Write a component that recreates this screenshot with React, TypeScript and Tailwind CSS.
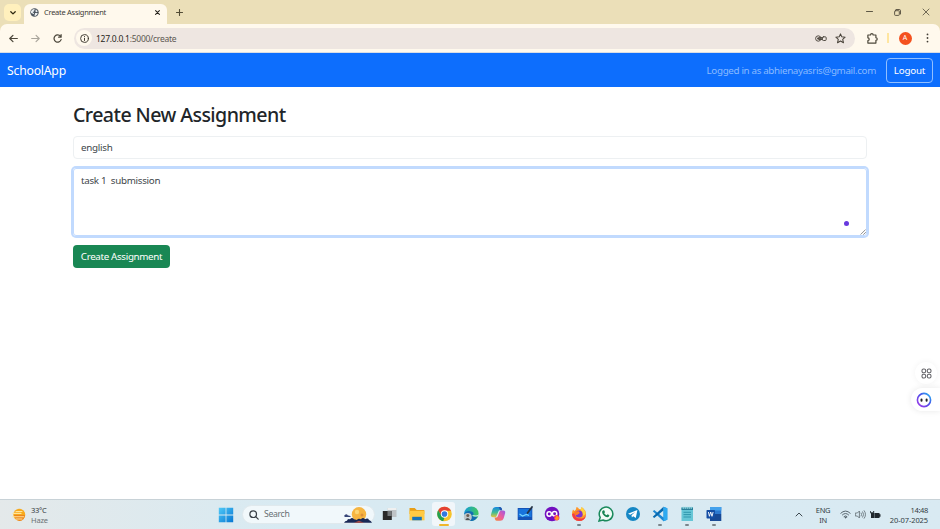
import type { ReactNode } from "react";

const svgProps = { fill: "none", strokeLinecap: "round", strokeLinejoin: "round" } as const;

function TabStrip() {
  return (
    <div className="flex h-6 bg-[#ebdfb8]">
      <div className="mt-[4px] ml-1 flex h-[17px] w-[17px] items-center justify-center rounded-[5px] bg-[#fff0bd]">
        <svg width="6" height="4" viewBox="0 0 6 4" {...svgProps} stroke="#302a12" strokeWidth="1.3"><path d="M.8.7 3 2.9 5.2.7" /></svg>
      </div>
      <div className="mt-1 ml-[3px] flex h-5 w-[143px] items-center rounded-t-[6px] bg-[#fff9ed] pr-[7px] pb-[3px] pl-[6px]">
        <svg width="9" height="9" viewBox="0 0 10 10"><circle cx="5" cy="5" r="4.7" fill="#4d5660" /><path d="M1 3.8C2 2 3 1 4.8 1.1l.5 1-1 .9v1L3 4.6l1.5 1.2-.4 1.1L2.7 6 1.2 5.5ZM6.5 1.5l2 2-.9 1.2-1.7-.8ZM5.7 5.6l2.9-.1-.8 2L5.9 9l-1-.5Z" fill="#e9edf0" /></svg>
        <span className="ml-[5px] grow text-[7.5px] tracking-[-0.28px] whitespace-nowrap text-[#3c3a36]">Create Assignment</span>
        <svg width="5" height="5" viewBox="0 0 5 5" {...svgProps} stroke="#25221b" strokeWidth="1.1"><path d="m.6.6 3.8 3.8m0-3.8L.6 4.4" /></svg>
      </div>
      <svg className="mt-[9px] ml-[9px]" width="7" height="7" viewBox="0 0 7 7" {...svgProps} stroke="#514b35" strokeWidth="1.1"><path d="M3.5.5v6m-3-3h6" /></svg>
      <div className="ml-auto flex h-6 items-center gap-[21px] pr-[10px]">
        <svg width="7" height="8" viewBox="0 0 7 8" {...svgProps} stroke="#5d5745"><path d="M.5 3.5h6" /></svg>
        <svg width="7" height="7" viewBox="0 0 7 7" {...svgProps} stroke="#514b3b" strokeWidth=".9"><rect x=".6" y="1.7" width="4.7" height="4.7" rx=".8" /><path d="M2 .5h3.2q1.3 0 1.3 1.3V5" /></svg>
        <svg width="8" height="8" viewBox="0 0 8 8" {...svgProps} stroke="#514b3b" strokeWidth=".8"><path d="m1 1 6 6m0-6L1 7" /></svg>
      </div>
    </div>
  );
}

function Toolbar() {
  return (
    <div className="bg-[#ebdfb8]">
      <div className="flex h-[29px] items-center rounded-t-[7px] border-b border-[#d9dde5] bg-[#fff9ed] pl-[9px]">
        <svg width="9" height="9" viewBox="0 0 8 8" {...svgProps} stroke="#4c473b" strokeWidth="1.1"><path d="M7.4 4H.8m2.7-2.8L.7 4l2.8 2.8" /></svg>
        <svg className="ml-[13px]" width="9" height="9" viewBox="0 0 8 8" {...svgProps} stroke="#aaa69c"><path d="M.6 4h6.6M4.5 1.2 7.3 4 4.5 6.8" /></svg>
        <svg className="ml-[13px]" width="9" height="9" viewBox="0 0 8 8" {...svgProps} stroke="#4c473b" strokeWidth="1.1"><path d="M6.7 2.1A3.2 3.2 0 1 0 7.2 5M7.2.6v2.2H5" /></svg>
        <div className="ml-[12px] flex h-[21px] w-[781px] items-center rounded-full bg-[#eee6e1] pr-[9px] pl-[2px]">
          <div className="flex size-[16px] items-center justify-center rounded-full bg-[#fff9ed]">
            <svg width="9" height="9" viewBox="0 0 9 9" {...svgProps} stroke="#3a362c" strokeWidth=".95"><circle cx="4.5" cy="4.5" r="3.9" /><path d="M4.5 4.2v2.3M4.5 2.5v.1" /></svg>
          </div>
          <span className="ml-[4px] grow pt-[2px] text-[8.5px] tracking-[-0.26px] text-[#5c5750]"><span className="text-[#292622]">127.0.0.1</span>:5000/create</span>
          <svg width="12" height="7" viewBox="0 0 12 7" {...svgProps} stroke="#514b43"><circle cx="3.3" cy="3.5" r="2.7" /><circle cx="3.3" cy="3.5" r=".8" fill="#514b43" /><path d="M4.2 2.6h3.1M4.2 4.5h3.1" /><rect x="7.4" y="1.8" width="3.8" height="3.7" rx="1" /></svg>
          <svg className="ml-[8px]" width="11" height="11" viewBox="0 0 10 10" {...svgProps} stroke="#49433a" strokeWidth=".95"><path d="m5 .8 1.2 2.7 3 .3L7 5.8l.7 3L5 7.3 2.3 8.8l.7-3-2.2-2 3-.3Z" /></svg>
        </div>
        <svg className="ml-[12px] shrink-0" width="11" height="11" viewBox="0 0 10 10" {...svgProps} stroke="#4e493b" strokeWidth="1.1"><path d="M.8 1.8h2.4a1.2 1.2 0 0 1 2.4 0h2.5v2.5a1.2 1.2 0 0 1 0 2.4v2.5H.8V6.8a1.2 1.2 0 0 0 0-2.4Z" /></svg>
        <div className="ml-[9px] h-[10px] w-[1.5px] shrink-0 bg-[#ffe6a0]" />
        <div className="ml-[10px] flex size-[13px] items-center justify-center rounded-full bg-[#f4511e] text-[7px] text-white">A</div>
        <svg className="ml-[14px]" width="3" height="10" viewBox="0 0 3 10" fill="#423e36"><circle cx="1.5" cy="1.4" r=".9" /><circle cx="1.5" cy="5" r=".9" /><circle cx="1.5" cy="8.6" r=".9" /></svg>
      </div>
    </div>
  );
}

function TaskIcon({ children, active, running }: { children: ReactNode; active?: boolean; running?: boolean }) {
  return (
    <div className="relative flex h-[29px] w-[27px] items-center justify-center pb-px">
      {active && <div className="absolute top-[2px] left-[2px] h-[24px] w-[23px] rounded-[3px] bg-[#f1f6fa]" />}
      <svg className="relative" width="16" height="16" viewBox="0 0 16 16">{children}</svg>
      {active && <div className="absolute bottom-[3px] h-[2px] w-[10px] rounded-full bg-[#efb62c]" />}
      {running && <div className="absolute bottom-[3px] h-[2px] w-[4px] rounded-full bg-[#7b858b]" />}
    </div>
  );
}

function Taskbar() {
  return (
    <footer className="flex h-[30px] items-center border-t border-[#c8d2d7] bg-linear-to-r from-[#e4e9ea] via-[#d8eaf2] via-30% to-[#d9eaf2]">
      <div className="flex w-[218px] items-center pl-[12px]">
        <svg width="14" height="14" viewBox="0 0 14 14"><circle cx="7.3" cy="6.8" r="6" fill="#f7aa1c" /><path d="M2 7h11q-.5 5.5-5.5 6Q3 12 2 7Z" fill="#ed841d" /><path d="M1 5.4h8M4 3.5h6M.7 8.7h11M4 11h6" stroke="#ffe49b" strokeWidth="1.1" strokeLinecap="round" /></svg>
        <div className="ml-[5px] text-[7.5px] leading-[10px]">
          <div className="tracking-[-0.3px] text-[#31373a]">33°C</div>
          <div className="tracking-[-0.15px] text-[#6b7174]">Haze</div>
        </div>
      </div>
      <svg width="16" height="16" viewBox="0 0 16 16"><defs><linearGradient id="win" x1="0" y1="0" x2="1" y2="1"><stop stopColor="#50c9f7" /><stop offset="1" stopColor="#0677d3" /></linearGradient></defs><path fill="url(#win)" d="M.8.8h6.8v6.8H.8ZM8.4.8h6.8v6.8H8.4ZM.8 8.4h6.8v6.8H.8ZM8.4 8.4h6.8v6.8H8.4Z" /></svg>
      <div className="ml-[8px] flex h-[19px] w-[133px] items-center rounded-full border border-[#e0e9ed] bg-[#f1f8fb] pl-[6px]">
        <svg width="10" height="10" viewBox="0 0 10 10" {...svgProps} stroke="#394047" strokeWidth="1.2"><circle cx="4.2" cy="4.2" r="3.3" /><path d="M6.7 6.7 9.2 9.2" /></svg>
        <span className="ml-[5px] grow pt-px text-[8.7px] tracking-[-0.35px] text-[#687075]">Search</span>
        <svg className="mr-[2px]" width="28" height="18" viewBox="0 0 28 18"><circle cx="15" cy="8.3" r="7.2" fill="#f6b541" /><circle cx="13" cy="6" r="2.2" fill="#fcd675" /><circle cx="18" cy="9" r="1.5" fill="#df913a" /><path d="M0 16.8q1-2 3-2 .5-2.5 3-1.5 2-2.5 4 0l3 .8q1-2 4-.9 2-2.5 4 0 3-1.7 4 .8 2 .7 3 2.8Z" fill="#192956" /><path d="M0 10q2-3 4-.5 2-.5 3 1.4H1Z" fill="#384679" /><path d="m10 16.8 5-2 5 2Z" fill="#a84c47" /></svg>
      </div>
      <div className="ml-px flex">
        <TaskIcon><path fill="#bfc4c7" d="M5.5 2h9v9h-9Z" /><path fill="#eff0f0" d="M5.5 2h9v2h-9Z" /><path fill="#292929" d="M.8 5h9v9h-9Z" /><path fill="#727678" d="M5.5 5h4.3v5H5.5Z" /></TaskIcon>
        <TaskIcon><path fill="#e89e16" d="M.5 2h5.2l2 2h7.6v4H.5Z" /><path fill="#ffca43" d="M.5 4.8h15v9.5H.5Z" /><path fill="#1773b8" d="M3.2 10.8h9.6v3.5H3.2Z" /></TaskIcon>
        <TaskIcon active><circle cx="8.5" cy="8" r="7.3" fill="#f5c42b" /><path d="M2.2 4.3A7.3 7.3 0 0 1 15 4.7H8.5L5.5 10Z" fill="#e44133" /><path d="M2.2 4.3 5.4 9.7 8.5 11.4 7.2 15.2A7.3 7.3 0 0 1 2.2 4.3Z" fill="#23a052" /><circle cx="8.5" cy="8" r="3.7" fill="white" /><circle cx="8.5" cy="8" r="2.8" fill="#3178df" /></TaskIcon>
        <TaskIcon><defs><linearGradient id="edge" x1="0" x2="1"><stop stopColor="#149bd9" /><stop offset="1" stopColor="#42c85a" /></linearGradient></defs><circle cx="8.4" cy="7.7" r="7.2" fill="url(#edge)" /><path d="M1.4 7q3-3 7-1.5c3.5 1.3 2 3.5.5 4.3 1.3 1.3 3.7 1.2 5.7.3Q11.9 16 7.4 14.7 2.4 13 1.4 7Z" fill="#146cb2" /><path d="M9 9.6q2 1.6 6 .6l.8-2q-1.4 2-4.9 1Z" fill="#e5f5f9" /><circle cx="4.8" cy="11" r="4" fill="#bec5c9" /><circle cx="4.8" cy="9.5" r="1.5" fill="#6c5c52" /><path d="M2.3 14q2-4 5 0Z" fill="#4c5258" /></TaskIcon>
        <TaskIcon><defs><linearGradient id="copLeft" x1="0" y1="0" x2="0" y2="1"><stop stopColor="#1688e1" /><stop offset=".55" stopColor="#43bd92" /><stop offset="1" stopColor="#f0c43b" /></linearGradient><linearGradient id="copRight" x1="1" y1="0" x2="0" y2="1"><stop stopColor="#9859e9" /><stop offset=".5" stopColor="#ed5d9a" /><stop offset="1" stopColor="#f58a35" /></linearGradient></defs><path d="M6 1h4q1.2 0 1.7 1.5l.5 1.8H10q-1.2 0-1.7 1.4L6.6 10q-.5 1.3-1.7 1.3H3Q.3 11.3 1 8.5l1.4-4.7Q3.2 1 6 1Z" fill="url(#copLeft)" /><path d="M11 4.5h2.2q2.6 0 1.9 2.7l-1.4 5q-.8 2.6-3.5 2.6H7q-1.5 0-2-1.5l-.4-1.7h1.5q1.3 0 1.7-1.4L9.4 6q.4-1.5 1.6-1.5Z" fill="url(#copRight)" /><path d="M8.6 1H10q1.2 0 1.7 1.5l.5 1.8h-2Z" fill="#2456af" /></TaskIcon>
        <TaskIcon><path fill="#1553b5" d="M.7 2h14.6v12H.7Z" /><path fill="#1874dc" d="M1.5 3h13v8h-13Z" /><path d="m2.5 8 3 2 4-1.5 2.5 1" fill="none" stroke="#78d6ff" strokeWidth="1.2" /><path d="M10.5 7 15 1" stroke="#273445" strokeWidth="1.8" strokeLinecap="round" /></TaskIcon>
        <TaskIcon><circle cx="8" cy="8" r="7.3" fill="#7210bf" /><circle cx="5.2" cy="8" r="2.2" fill="none" stroke="white" strokeWidth="1.5" /><circle cx="10.6" cy="7.8" r="2.2" fill="none" stroke="white" strokeWidth="1.5" /><circle cx="12.7" cy="11.8" r="2.7" fill="#ee2d76" /><path d="m10.7 13 2-4 2.5 3-2 2.5Z" fill="#ff9a1d" /></TaskIcon>
        <TaskIcon running><path d="M2 3.5 3.5 5l1.4-1.6L5.5 1q2 .7 2.5 2l2.5.5L10.5 1Q15.5 4 15 9q-1 6-7 6T1 8.5q0-3 1-5Z" fill="#ff9727" /><path d="M1 8q1 7 7 7t7-6q-2 4-5 3.5Q4 13 3.5 7Z" fill="#f33b45" /><circle cx="8.1" cy="8" r="3.6" fill="#8035cd" /><path d="m3.5 5.5 4.3-.2 1 1.7-2.6 2q-2.5.4-3-1.5Z" fill="#ff7926" /><path d="M10.5 1q4 3 4.2 7l-2.5 2q.3-4-2.6-6Z" fill="#ffd33e" /></TaskIcon>
        <TaskIcon><path d="M1 15 2.2 11.4A6.8 6.8 0 1 1 5 14Z" fill="#f1fbf6" stroke="#19895b" strokeWidth="1.5" /><path d="m5.2 4.2 1.2.2.6 1.8-.8 1q1 1.5 2.5 2.1l.9-1 1.8.9q-.3 2.2-2.2 2-3.6-.7-5-4.3-.5-1.8 1-2.7Z" fill="#188553" /></TaskIcon>
        <TaskIcon><circle cx="8" cy="8" r="7" fill="#1687c4" /><path d="m3 7.8 9.4-3.7-1.6 8-2.6-1.8-1.3 1.3-.4-2.3 3.7-3.2-5 2.7Z" fill="white" /></TaskIcon>
        <TaskIcon running><path d="m11.5.7 3.8 1.6v11.4l-3.8 1.6L.8 5.3l1.4-1.2 9.3 7.4Z" fill="#1c86d1" /><path d="m11.5.7-10.7 10 1.4 1.2 9.3-7.4Z" fill="#0869ae" /><path d="m11.5.7 3.8 1.6v11.4l-3.8 1.6Z" fill="#2eaaf0" /></TaskIcon>
        <TaskIcon running><path fill="#66c6d6" d="M2.5 1.5h11.5v13.5H2.5Z" /><path fill="#277e99" d="M2.5 1.5h11.5V4H2.5Z" /><path d="M4.2.7V3m2-2.3V3m2-2.3V3m2-2.3V3m2-2.3V3" stroke="#9bdce4" /><path d="M4.5 6.3h7.5M4.5 8.6h7.5M4.5 11h7.5" stroke="#3096ad" /></TaskIcon>
        <TaskIcon running><path fill="#2c78cf" d="M4 1h11.3v7H4Z" /><path fill="#42a1ec" d="M4 1h11.3v3.5H4Z" /><path fill="#174995" d="M4 8h11.3v7H4Z" /><rect y="4" x=".5" width="8.5" height="8.5" rx=".7" fill="#144da3" /><path d="m2.4 6 1 4.3L4.7 6 6 10.3 7.1 6" fill="none" stroke="white" strokeWidth=".9" /></TaskIcon>
      </div>
      <div className="ml-auto flex items-center pr-[12px] text-[7.5px] leading-[10px] text-[#333d43]">
        <svg width="8" height="5" viewBox="0 0 8 5" {...svgProps} stroke="#3f4a50"><path d="m1 4 3-3 3 3" /></svg>
        <div className="ml-[12px] w-[16px] text-center tracking-[-0.3px]">ENG<br />IN</div>
        <svg className="ml-[9px]" width="11" height="9" viewBox="0 0 11 9" {...svgProps} stroke="#526068" strokeWidth=".95"><path d="M.8 3.2q4.7-4.5 9.4 0M2.4 4.9q3.1-3 6.2 0M4 6.5q1.5-1.4 3 0" /><circle cx="5.5" cy="7.6" r=".5" fill="#526068" /></svg>
        <svg className="ml-[4px]" width="11" height="9" viewBox="0 0 11 9" {...svgProps} stroke="#5c676d" strokeWidth=".8"><path d="M.7 3h1.7l2-2v7l-2-2H.7Zm5.5 0q1 1.5 0 3m1.5-4.2q2 2.7 0 5.4M9.2.7q2.8 3.8 0 7.6" /></svg>
        <svg className="ml-[4px]" width="11" height="8" viewBox="0 0 11 8"><path d="M1 2h8.5v1.3h1v2.4h-1V7H1Z" fill="#20282e" /><path d="M.3 0v1.8h3.4V0M2 2v3" stroke="#20282e" fill="none" /><path d="M4.5 2v5" stroke="#91a0a7" strokeWidth=".5" /></svg>
        <div className="ml-[6px] w-[41px] text-right whitespace-nowrap"><span className="tracking-[-0.35px]">14:48</span><br /><span className="tracking-[-0.1px]">20-07-2025</span></div>
      </div>
    </footer>
  );
}

export default function App() {
  return (
    <div className="flex h-[529px] w-[940px] flex-col overflow-hidden bg-white font-['Noto_Sans','Open_Sans',sans-serif]">
      <TabStrip />
      <Toolbar />
      <nav className="flex h-[34px] items-center bg-[#0d6efd] pt-px pr-[7px] pl-[7px]">
        <span className="pt-px text-[12.2px] tracking-[-0.2px] text-white">SchoolApp</span>
        <span className="ml-auto pt-[2px] text-[9.8px] tracking-[-0.34px] text-[#8abaff]">Logged in as abhienayasris@gmail.com</span>
        <button className="ml-[10px] h-[25px] w-[47px] rounded-[4px] border border-[#91bfff] pt-px text-[9.8px] tracking-[-0.2px] text-white">Logout</button>
      </nav>
      <main className="relative grow px-[73px] pt-[15px]">
        <h1 className="h-[34px] text-[19.6px] leading-[26px] font-medium tracking-[-0.58px] text-[#212529]">Create New Assignment</h1>
        <div className="flex h-[23px] items-center rounded-[4px] border border-[#edf0f2] px-[7px] pt-[2px] text-[9.8px] tracking-[-0.28px] text-[#41464b]">english</div>
        <div className="relative mt-[9px] h-[68px] rounded-[3px] border border-[#c1dafe] px-[7px] pt-[5px] text-[9.8px] leading-[14px] tracking-[-0.3px] whitespace-pre text-[#41464b] ring-2 ring-[#c1dafe]">
          task 1  submission
          <div className="absolute right-[17px] bottom-[9px] size-[5px] rounded-full bg-[#6739df]" />
          <svg className="absolute right-0 bottom-0" width="6" height="6" viewBox="0 0 6 6" stroke="#737373" strokeWidth=".8"><path d="m.6 5.5 5-5M3.3 5.7l2.5-2.5" /></svg>
        </div>
        <button className="mt-[9px] h-[23px] w-[97px] rounded-[4px] bg-[#198754] pt-[2px] text-[9.8px] tracking-[-0.34px] whitespace-nowrap text-white">Create Assignment</button>
        <div className="absolute top-[275px] right-[3px] flex size-[22px] items-center justify-center rounded-full bg-white shadow-[0_0_6px_#0000000d]">
          <svg width="11" height="11" viewBox="0 0 11 11" fill="none" stroke="#626267" strokeWidth="1.05"><rect x="1" y="1" width="3.7" height="3.7" rx="1.5" /><rect x="6.3" y="1" width="3.7" height="3.7" rx="1.5" /><rect x="1" y="6.3" width="3.7" height="3.7" rx="1.5" /><rect x="6.3" y="6.3" width="3.7" height="3.7" rx="1.5" /></svg>
        </div>
        <div className="absolute top-[301px] right-0 flex h-[23px] w-[29px] items-center rounded-l-full bg-white pl-[5px] shadow-[0_0_6px_#00000018]">
          <svg width="16" height="16" viewBox="0 0 16 16"><defs><linearGradient id="bot" x1="0" y1="1" x2="1" y2="0"><stop stopColor="#a73be9" /><stop offset=".55" stopColor="#4a4be9" /><stop offset="1" stopColor="#24bcf4" /></linearGradient></defs><circle cx="8" cy="8" r="6.6" fill="white" stroke="url(#bot)" strokeWidth="1.6" /><path d="M5.5 7.5v1.2M10.6 7.5v1.2" stroke="#222" strokeWidth="2" strokeLinecap="round" /></svg>
        </div>
      </main>
      <Taskbar />
    </div>
  );
}
